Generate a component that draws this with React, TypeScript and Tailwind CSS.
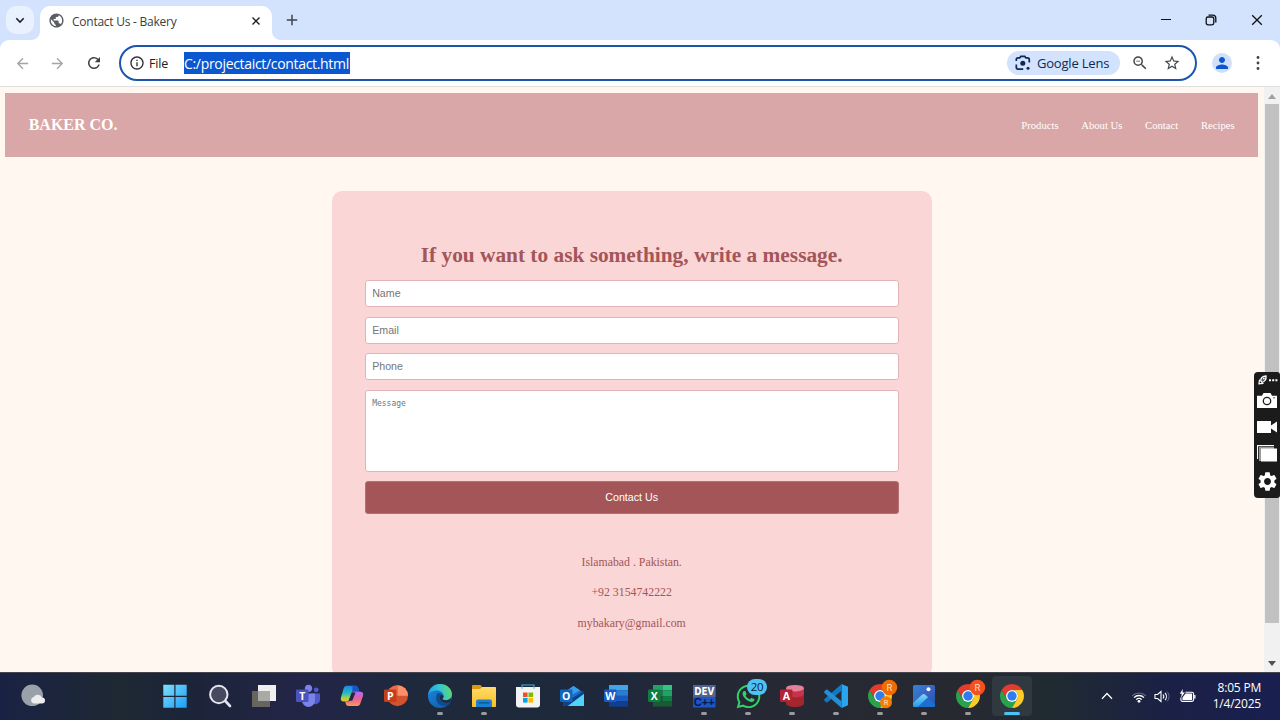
import React from "react";
import {
  MdArrowBack,
  MdArrowForward,
  MdInfoOutline,
  MdOutlineZoomOut,
  MdPerson,
  MdPublic,
  MdRefresh,
  MdSettings,
  MdStarBorder,
} from "react-icons/md";
import { FaWhatsapp } from "react-icons/fa";

type IconProps = { children: React.ReactNode; className?: string };

function Icon({ children, className = "h-6 w-6" }: IconProps) {
  return (
    <svg viewBox="0 0 24 24" className={`${className} overflow-visible`}>
      {children}
    </svg>
  );
}

function AppLetter({ x, y, letter }: { x: number; y: number; letter: string }) {
  return (
    <text x={x} y={y} fill="#fff" fontSize="10.5" fontWeight="700" textAnchor="middle" fontFamily="Open Sans, sans-serif">
      {letter}
    </text>
  );
}

function WindowsLogo() {
  return (
    <Icon>
      <defs>
        <linearGradient id="win" x1="0" y1="0" x2="1" y2="1">
          <stop offset="0" stopColor="#7fe0fb" />
          <stop offset="1" stopColor="#1a9cf5" />
        </linearGradient>
      </defs>
      <path d="M.3.8h11v11H.3zM12.5.8h11.2v11H12.5zM.3 13h11v10.800H.3zM12.5 13h11.2v10.800H12.5z" fill="url(#win)" />
    </Icon>
  );
}

function SearchLogo() {
  return (
    <Icon>
      <circle cx="10.8" cy="10.5" r="8.700" fill="#454a60" stroke="#e4e6ee" strokeWidth="2" />
      <path d="M17.300 17 22 22" stroke="#e4e6ee" strokeWidth="2.600" strokeLinecap="round" />
    </Icon>
  );
}

function TaskView() {
  return (
    <Icon>
      <path d="M0 7h18v16H0z" fill="#66665f" />
      <path d="M6 1h18v16H6z" fill="#efefef" />
      <path d="M6 7h12v10H6z" fill="#a9a9a6" />
    </Icon>
  );
}

function Teams() {
  return (
    <Icon>
      <circle cx="12.5" cy="4.300" r="3.600" fill="#7b83eb" />
      <circle cx="20.200" cy="5.800" r="2.400" fill="#5059c9" />
      <path d="M15 9.500h9v6.500a4.400 4.400 0 0 1-7 3.400z" fill="#5059c9" />
      <path d="M6 9.500h13v7a6.500 6.500 0 0 1-13 0z" fill="#7b83eb" />
      <rect x="0" y="5.500" width="12.500" height="12.500" rx="1.200" fill="#4b53bc" />
      <AppLetter x={6.2} y={15.6} letter="T" />
    </Icon>
  );
}

function Copilot() {
  return (
    <Icon>
      <defs>
        <linearGradient id="cpA" x1="0" y1="0" x2="0" y2="1">
          <stop offset="0" stopColor="#1b88e6" />
          <stop offset=".45" stopColor="#25b5c9" />
          <stop offset=".75" stopColor="#9bd04a" />
          <stop offset="1" stopColor="#f5c52e" />
        </linearGradient>
        <linearGradient id="cpB" x1="0" y1="0" x2="0" y2="1">
          <stop offset="0" stopColor="#b06af0" />
          <stop offset=".5" stopColor="#ea5f9c" />
          <stop offset="1" stopColor="#fa9a54" />
        </linearGradient>
      </defs>
      <path d="M6.700 1.800h8.800c1.600 0 2.300 1 2.700 2.300l1.200 3.600h-5.100c-1.600 0-2.300.9-2.700 2.300L9.300 15.500c-.5 1.400-1.300 2-2.700 2H3.500C1.200 17.500.3 15.800 1 13.200L3.600 4.500C4.200 2.700 5.100 1.800 6.700 1.800z" fill="url(#cpA)" />
      <path d="M12.500 1.800h3c1.600 0 2.300 1 2.700 2.300l1.200 3.600h-5.100c-.9 0-1.600.3-2 .9z" fill="#1b52c4" />
      <path d="M17.300 22h-8.800c-1.600 0-2.300-1-2.700-2.300l-.7-2.200h2.300c1.600 0 2.300-.9 2.700-2.300l2-5.500c.5-1.400 1.300-2 2.700-2h5.700c2.300 0 3.200 1.700 2.500 4.300l-2.600 7.300C19.800 21.100 18.900 22 17.300 22z" fill="url(#cpB)" />
      <path d="M11.700 8.600h3.900l-3.400 8.200H8.600z" fill="#222745" />
    </Icon>
  );
}

function PowerPoint() {
  return (
    <Icon>
      <circle cx="13.500" cy="11.700" r="10.500" fill="#d35230" />
      <path d="M13.500 1.200A10.500 10.500 0 0 1 24 11.700H13.500z" fill="#ff8f6b" />
      <path d="M13.500 1.200A10.500 10.500 0 0 0 3 11.700h10.500z" fill="#ed6c47" />
      <rect x="0" y="5.500" width="12.500" height="12.500" rx="1.200" fill="#c43e1c" />
      <AppLetter x={6.3} y={15.6} letter="P" />
    </Icon>
  );
}

function Edge() {
  return (
    <Icon>
      <defs>
        <linearGradient id="edA" x1="0" y1=".5" x2="1" y2=".3">
          <stop offset="0" stopColor="#1f9fe8" />
          <stop offset=".5" stopColor="#33c3d6" />
          <stop offset="1" stopColor="#5fdc62" />
        </linearGradient>
        <linearGradient id="edB" x1="0" y1="0" x2="1" y2="1">
          <stop offset="0" stopColor="#1b8be0" />
          <stop offset="1" stopColor="#0f539f" />
        </linearGradient>
      </defs>
      <circle cx="12" cy="12" r="12" fill="url(#edB)" />
      <path d="M.1 11C.7 4.800 5.700 0 12 0c7 0 12 5 12 10.300 0 3.700-2.900 6-6 6-2.400 0-4-.8-3.400-1.700.7-.9 1-1.700 1-2.700C15.600 8.800 12.300 6.500 9 6.500 4.500 6.500 1 8.800.1 11z" fill="url(#edA)" />
      <path d="M9.400 9.600c-2.900 4.500-.8 11.600 6 12.200 2.700.2 5.300-1 7.100-3.300-3.300 1.300-7.500 1-9.500-1.500-1.300-1.600-1.500-3.200-.8-4.700.5-1 .3-2.200-.5-2.700-.8-.6-1.800-.5-2.300 0z" fill="#0d4a90" />
      <path d="M12.200 12.300c.5-1 .5-2-.3-2.700l3.700 2.300c0 1-.3 1.800-1 2.700-.6.900 1 1.700 3.400 1.700 2 0 4-1 5.100-2.700-.2 1.800-.5 3.100-1.100 4.700-3 1.200-7 .9-9-1.500-1.300-1.600-1.500-3.200-.8-4.500z" fill="#212c3f" />
    </Icon>
  );
}

function Explorer() {
  return (
    <Icon>
      <defs>
        <linearGradient id="fold" x1="0" y1="0" x2="0" y2="1">
          <stop offset="0" stopColor="#fedb6a" />
          <stop offset="1" stopColor="#f8bf26" />
        </linearGradient>
      </defs>
      <path d="M0 2.200C0 1.500.5 1 1.200 1h7.300l2 2.500V8H0z" fill="#d99a11" />
      <path d="M0 5h8l2.300-2H23c.6 0 1 .4 1 1v18c0 .6-.4 1-1 1H1c-.6 0-1-.4-1-1z" fill="url(#fold)" />
      <path d="M4 23v-5.500c0-1.200.8-2 2-2h12c1.200 0 2 .8 2 2V23z" fill="#1a80d2" />
      <path d="M7 18.800h10" stroke="#0c4f8d" strokeWidth="1.300" strokeLinecap="round" />
    </Icon>
  );
}

function Store() {
  return (
    <Icon>
      <path d="M6 4.500V1h12v3.500" fill="none" stroke="#3bb4e8" strokeWidth="1.100" />
      <path d="M0 3h24v17.500c0 2-1 3-3 3H3c-2 0-3-1-3-3z" fill="#f3f3f3" />
      <path d="M6 3v1.800M18 3v1.800" stroke="#3bb4e8" strokeWidth="1.100" />
      <path d="M7 8.500h4.600v4.600H7z" fill="#f25022" />
      <path d="M12.500 8.500h4.600v4.600h-4.600z" fill="#7fba00" />
      <path d="M7 14h4.600v4.600H7z" fill="#00a4ef" />
      <path d="M12.500 14h4.600v4.600h-4.600z" fill="#ffb900" />
    </Icon>
  );
}

function Outlook() {
  return (
    <Icon>
      <path d="M3 9 13.500 2 24 9v13H3z" fill="#1a6fc9" />
      <path d="M5 8 13.500 2 20 6.300 10 12z" fill="#3c9cec" />
      <path d="M24 9v12c0 .8-.4 1-1 1H5l9-7z" fill="#3fc7f4" />
      <path d="M3 15l8 0 8.500-5.500L24 7v3L8 22H4.500C3.500 22 3 21.500 3 20.500z" fill="#0f3f91" />
      <path d="M24 10v11c0 .8-.4 1-1 1H8z" fill="#4fd4f7" />
      <rect x="0" y="5.500" width="12.500" height="12.500" rx="1.200" fill="#1066bd" />
      <AppLetter x={6.3} y={15.6} letter="O" />
    </Icon>
  );
}

function OfficeDoc({ letter, shades, badge }: { letter: string; shades: string[]; badge: string }) {
  return (
    <Icon>
      {shades.map((shade, i) => (
        <rect key={shade} x="5" y={1 + i * 5.4} width="19" height="5.5" fill={shade} />
      ))}
      <rect x="0" y="5.500" width="12.500" height="12.500" rx="1.200" fill={badge} />
      <AppLetter x={6.3} y={15.6} letter={letter} />
    </Icon>
  );
}

function Excel() {
  return (
    <Icon>
      <path d="M5 1h9.500v5.500H5z" fill="#21a366" />
      <path d="M14.500 1H24v5.500h-9.500z" fill="#33c481" />
      <path d="M5 6.500h9.500V12H5z" fill="#107c41" />
      <path d="M14.500 6.500H24V12h-9.500z" fill="#21a366" />
      <path d="M5 12h9.500v5.500H5z" fill="#185c37" />
      <path d="M14.500 12H24v5.500h-9.500z" fill="#107c41" />
      <path d="M5 17.500h19v5H5z" fill="#185c37" />
      <rect x="0" y="5.500" width="12.500" height="12.500" rx="1.200" fill="#107c41" />
      <AppLetter x={6.3} y={15.6} letter="X" />
    </Icon>
  );
}

function DevCpp() {
  return (
    <Icon>
      <rect x="1" y="1" width="22.500" height="22.500" fill="#1c55c4" />
      <rect x="1" y="1" width="22.500" height="12" fill="#52638f" />
      <text x="12.200" y="11.300" fill="#fff" fontSize="10" fontWeight="700" textAnchor="middle" fontFamily="DejaVu Sans" textLength="20" lengthAdjust="spacingAndGlyphs">DEV</text>
      <text x="12.200" y="21.800" fill="#06184a" fontSize="11" fontWeight="700" textAnchor="middle" fontFamily="Liberation Sans" textLength="21" lengthAdjust="spacingAndGlyphs">C++</text>
    </Icon>
  );
}

function Access() {
  return (
    <Icon>
      <path d="M6 4v15.500c0 2 4 3.500 9 3.500s9-1.500 9-3.500V4z" fill="#a4262c" />
      <path d="M6 10c0 2 4 3.300 9 3.300S24 12 24 10V4H6z" fill="#c8324b" />
      <ellipse cx="15" cy="4.200" rx="9" ry="3.300" fill="#e3809a" />
      <rect x="0" y="5.500" width="12.500" height="12.500" rx="1.200" fill="#b02434" />
      <AppLetter x={6.3} y={15.6} letter="A" />
    </Icon>
  );
}

function VsCode() {
  return (
    <Icon>
      <path d="M17.500 0 24 2.800v18.400L17.500 24z" fill="#2aa4ef" />
      <path d="M17.500 0v6.800L3.500 18.200c-.4.3-.9.3-1.300 0L.5 16.700c-.5-.5-.5-1.200 0-1.600z" fill="#1478bf" />
      <path d="M17.500 24v-6.800L3.500 5.800c-.4-.3-.9-.3-1.300 0L.5 7.300c-.5.5-.5 1.200 0 1.600z" fill="#2190d8" />
    </Icon>
  );
}

function ChromeMark() {
  return (
    <>
      <path d="M1.610 6A12 12 0 0 1 22.390 6H12A6 6 0 0 0 6.800 15z" fill="#e33b2e" />
      <path d="M1.610 6 6.800 15A6 6 0 0 0 17.200 15L12 24A12 12 0 0 1 1.610 6z" fill="#2aa14b" />
      <path d="M22.390 6A12 12 0 0 1 12 24l5.200-9A6 6 0 0 0 12 6z" fill="#fccb26" />
      <circle cx="12" cy="12" r="6" fill="#fff" />
      <circle cx="12" cy="12" r="4.700" fill="#2d7df0" />
    </>
  );
}

function Chrome({ badges = 0 }: { badges?: number }) {
  return (
    <Icon>
      <ChromeMark />
      {badges > 0 && (
        <>
          <circle cx="21.400" cy="3.500" r="7.800" fill={badges === 1 ? "#f4511e" : "#ef6c00"} />
          <text x="21.400" y="7" fill="#ffdcc8" fontSize="9.500" textAnchor="middle" fontFamily="Roboto, sans-serif">R</text>
        </>
      )}
      {badges > 1 && (
        <>
          <circle cx="18" cy="18.300" r="6" fill="#f57c00" />
          <text x="18" y="21" fill="#ffe3c8" fontSize="7.500" textAnchor="middle" fontFamily="Roboto, sans-serif">R</text>
        </>
      )}
    </Icon>
  );
}

function WhatsApp() {
  return (
    <div className="relative h-6 w-6">
      <FaWhatsapp className="-mt-px -ml-px h-[27px] w-[27px] text-[#2fd366]" />
      <span className="absolute -top-[5px] left-[11px] flex h-[16px] w-[20px] items-center justify-center rounded-full bg-[#4cc2f5] font-['Open_Sans',sans-serif] text-[11.500px] leading-none tracking-[-0.3px] text-[#10212c]">
        20
      </span>
    </div>
  );
}

function Photos() {
  return (
    <Icon>
      <defs>
        <linearGradient id="ph" x1="0" y1="0" x2="1" y2="1">
          <stop offset="0" stopColor="#2b86d8" />
          <stop offset=".5" stopColor="#3f62bf" />
          <stop offset="1" stopColor="#1a57b4" />
        </linearGradient>
        <linearGradient id="ph2" x1="0" y1="0" x2="0" y2="1">
          <stop offset="0" stopColor="#7fd8fb" />
          <stop offset="1" stopColor="#2398e8" />
        </linearGradient>
      </defs>
      <rect x="1" y="1" width="22" height="22" rx="1.500" fill="url(#ph)" />
      <path d="M1 19 10.300 10.500c.9-.8 1.800-.8 2.700 0l3 2.800L6 23H2.500C1.500 23 1 22.500 1 21.500z" fill="url(#ph2)" />
      <path d="M6 23 14.500 15c.8-.7 1.700-.7 2.500 0l6 5.500v1c0 1-.5 1.500-1.500 1.500z" fill="#1b6fd0" />
      <circle cx="16.500" cy="5.300" r="2" fill="#f2f8ff" />
    </Icon>
  );
}

const apps: { name: string; icon: React.ReactNode; open?: boolean; active?: boolean }[] = [
  { name: "start", icon: <WindowsLogo /> },
  { name: "search", icon: <SearchLogo /> },
  { name: "taskview", icon: <TaskView /> },
  { name: "teams", icon: <Teams /> },
  { name: "copilot", icon: <Copilot /> },
  { name: "powerpoint", icon: <PowerPoint /> },
  { name: "edge", icon: <Edge />, open: true },
  { name: "explorer", icon: <Explorer />, open: true },
  { name: "store", icon: <Store /> },
  { name: "outlook", icon: <Outlook /> },
  { name: "word", icon: <OfficeDoc letter="W" badge="#185abd" shades={["#41a5ee", "#2b7cd3", "#185abd", "#103f91"]} /> },
  { name: "excel", icon: <Excel /> },
  { name: "devcpp", icon: <DevCpp />, open: true },
  { name: "whatsapp", icon: <WhatsApp />, open: true },
  { name: "access", icon: <Access />, open: true },
  { name: "vscode", icon: <VsCode />, open: true },
  { name: "chrome-a", icon: <Chrome badges={2} />, open: true },
  { name: "photos", icon: <Photos />, open: true },
  { name: "chrome-b", icon: <Chrome badges={1} />, open: true },
  { name: "chrome", icon: <Chrome />, active: true },
];

function TabStrip() {
  return (
    <div className="flex h-10 items-start bg-[#d3e2fd]">
      <div className="mt-[6px] ml-[6px] flex h-7 w-7 items-center justify-center rounded-[10px] bg-[#e9f0fe]">
        <svg viewBox="0 0 10 10" className="h-[10px] w-[10px]">
          <path d="M1.300 3.300 5 7l3.700-3.700" fill="none" stroke="#1c1f25" strokeWidth="1.600" />
        </svg>
      </div>
      <div className="h-2 w-[6px] shrink-0" />
      <div className="relative mt-[6px] flex h-[34px] w-[232px] items-center rounded-t-[10px] bg-white pb-[5px]">
        <span className="absolute bottom-0 -left-2 h-2 w-2 bg-[radial-gradient(circle_at_0_0,transparent_7.500px,white_8px)]" />
        <span className="absolute -right-2 bottom-0 h-2 w-2 bg-[radial-gradient(circle_at_100%_0,transparent_7.500px,white_8px)]" />
        <MdPublic className="ml-2 h-[17px] w-[17px] text-[#5a5e63]" />
        <span className="ml-[7px] flex-1 pt-[2px] text-[12px] tracking-[-0.25px] whitespace-nowrap text-[#3b3d41]">Contact Us - Bakery</span>
        <svg viewBox="0 0 10 10" className="mr-[11px] h-[10px] w-[10px]">
          <path d="M1.500 1.500l7 7M8.500 1.500l-7 7" stroke="#1f2023" strokeWidth="1.400" />
        </svg>
      </div>
      <svg viewBox="0 0 12 12" className="mt-[14px] ml-[14px] h-3 w-3">
        <path d="M6 .8v10.400M.8 6h10.400" stroke="#3f444c" strokeWidth="1.500" />
      </svg>
      <div className="mt-[14px] mr-[17px] ml-auto flex h-3 items-center">
        <svg viewBox="0 0 10 10" className="h-[10px] w-[10px]">
          <path d="M0 4.500h10" stroke="#111" strokeWidth="1" />
        </svg>
        <svg viewBox="0 0 12 12" className="ml-[34px] h-3 w-3">
          <rect x="1.200" y="3" width="7.600" height="7.800" rx="1.800" fill="none" stroke="#111" strokeWidth="1.300" />
          <path d="M3.500 1.200h4.300c2 0 3 1.100 3 3v4.300" fill="none" stroke="#111" strokeWidth="1.300" />
        </svg>
        <svg viewBox="0 0 12 12" className="ml-[34px] h-3 w-3">
          <path d="M1.200 1.200l9.600 9.600M10.800 1.200l-9.600 9.600" stroke="#111" strokeWidth="1.300" />
        </svg>
      </div>
    </div>
  );
}

function Toolbar() {
  return (
    <div className="bg-[#d3e2fd]">
      <div className="flex h-[47px] items-start rounded-t-[9px] border-b border-[#dfdfdf] bg-white">
        <div className="ml-[14px] flex h-[46px] items-center">
          <MdArrowBack className="h-[17px] w-[17px] text-[#a3a5a9]" />
          <MdArrowForward className="ml-[18px] h-[17px] w-[17px] text-[#a3a5a9]" />
          <MdRefresh className="ml-[19px] h-[18px] w-[18px] text-[#3f4246]" />
        </div>
        <div className="mt-[5px] ml-4 flex h-9 w-[1078px] items-center rounded-full border-2 border-[#1b55ac] bg-white">
          <MdInfoOutline className="ml-2 h-4 w-4 text-[#2a2d31]" />
          <span className="ml-1 w-[35px] pt-[2px] text-[12.500px] tracking-[-0.2px] text-[#202124]">File</span>
          <span className="flex h-[22px] w-[166px] items-center bg-[#0b57d0] text-[14px] tracking-[-0.32px] whitespace-nowrap text-white">
            C:/projectaict/contact.html
          </span>
          <div className="ml-auto flex h-6 w-[113px] items-center rounded-full bg-[#d3e2fd] whitespace-nowrap">
            <svg viewBox="0 0 16 16" className="ml-2 h-4 w-4">
              <g fill="none" stroke="#0b2a55" strokeWidth="1.700">
                <path d="M1.300 6V4.800c0-1.100.8-1.900 1.900-1.900h1.500L5.800 1.400h4l1.100 1.500h1.500c1.100 0 1.900.8 1.900 1.900V7.500M1.300 9.500v2.700c0 1.100.8 1.900 1.900 1.900h5" />
              </g>
              <circle cx="7.800" cy="8.300" r="2.500" fill="#0b2a55" />
              <circle cx="13" cy="13.300" r="1.500" fill="#0b2a55" />
            </svg>
            <span className="ml-[6px] pt-px text-[13px] font-medium tracking-[-0.2px] text-[#0b2a55]">Google Lens</span>
          </div>
          <MdOutlineZoomOut className="ml-[11px] h-[18px] w-[18px] text-[#45484d]" />
          <MdStarBorder className="mr-[14px] ml-[14px] h-[18px] w-[18px] text-[#45484d]" />
        </div>
        <div className="mt-[13px] ml-[15px] flex h-5 w-5 items-center justify-center rounded-full bg-[#d0e0fb]">
          <MdPerson className="h-[18px] w-[18px] text-[#0b57d0]" />
        </div>
        <svg viewBox="0 0 4 16" className="mt-[15px] mr-5 ml-auto h-4 w-1">
          <circle cx="2" cy="2.500" r="1.400" fill="#3e4145" />
          <circle cx="2" cy="8" r="1.400" fill="#3e4145" />
          <circle cx="2" cy="13.500" r="1.400" fill="#3e4145" />
        </svg>
      </div>
    </div>
  );
}

const fieldClass =
  "block w-full rounded-[3px] border border-[#e3b4b7] bg-white pr-[6px] pb-[2px] pl-[6.500px] text-[10.670px] font-['Liberation_Sans',sans-serif] placeholder:text-[#757575] placeholder:opacity-100";

function Page() {
  return (
    <main className="flex-1 overflow-hidden pt-[6px] pr-[6px] pl-[5.330px] font-['Liberation_Serif',serif]">
      <header className="flex h-[64px] items-center justify-between bg-[#d9a7a7] px-[23.330px] text-white">
        <div className="text-[16px] font-bold whitespace-nowrap">BAKER CO.</div>
        <nav className="flex gap-[22.700px] text-[10.670px] whitespace-nowrap">
          <a>Products</a>
          <a>About Us</a>
          <a>Contact</a>
          <a>Recipes</a>
        </nav>
      </header>
      <section className="mx-auto mt-[34px] h-[486px] w-[600px] rounded-[10px] bg-[#fad6d6] px-[33px] pt-[50px] text-center text-[#a35558]">
        <h1 className="h-[39px] text-[21.330px] leading-[28px] font-bold whitespace-nowrap">If you want to ask something, write a message.</h1>
        <form className="flex flex-col">
          <input className={`${fieldClass} h-[27px]`} placeholder="Name" />
          <input className={`${fieldClass} mt-[10px] h-[27px]`} placeholder="Email" />
          <input className={`${fieldClass} mt-[9px] h-[27px]`} placeholder="Phone" />
          <textarea
            className="mt-[10px] block h-[82px] w-full resize-none rounded-[3px] border border-[#e3b4b7] bg-white px-[6.500px] pt-[7px] font-['DejaVu_Sans_Mono',monospace] text-[8px] placeholder:text-[#757575]"
            placeholder="Message"
          />
          <button type="button" className="mt-[9px] h-[33px] rounded-[3px] border border-[#b86f72] bg-[#a35558] pb-[2px] font-['Liberation_Sans',sans-serif] text-[10.670px] text-white">
            Contact Us
          </button>
        </form>
        <div className="mt-[39.500px] text-[11.800px] leading-[16px] whitespace-nowrap">
          <p>Islamabad . Pakistan.</p>
          <p className="mt-[14px]">+92 3154742222</p>
          <p className="mt-[15px]">mybakary@gmail.com</p>
        </div>
      </section>
    </main>
  );
}

function Scrollbar() {
  return (
    <div className="flex w-4 flex-col items-center bg-[#f1f1f1] pt-[7px] pb-[6px]">
      <svg viewBox="0 0 8 5" className="h-[5px] w-2">
        <path d="M0 5 4 0l4 5z" fill="#a0a0a0" />
      </svg>
      <div className="mt-[5px] h-[519px] w-[14px] bg-[#c1c1c1]" />
      <svg viewBox="0 0 8 5" className="mt-auto h-[5px] w-2">
        <path d="M0 0h8L4 5z" fill="#505050" />
      </svg>
    </div>
  );
}

function Recorder() {
  return (
    <div className="absolute top-[372px] right-0 flex h-[126px] w-[26px] flex-col items-center rounded-l-[4px] rounded-r-[3px] bg-[#1b1b1b]">
      <svg viewBox="0 0 20 10" className="mt-[3px] ml-[1px] h-[10px] w-5">
        <path d="M2.800 6C2.300 3.200 4.500 1 8 1c.4 3.300-1.200 6-4 6.300z" fill="#555" stroke="#fff" strokeWidth="1.300" />
        <path d="M1.600 4.500.9 8.900l4.600-.6" fill="none" stroke="#fff" strokeWidth="1.200" />
        <circle cx="5.800" cy="3.600" r=".9" fill="#fff" />
        <path d="M11 4.200h2v2h-2zM14.200 4.200h2v2h-2zM17.400 4.200h2v2h-2z" fill="#fff" />
      </svg>
      <svg viewBox="0 0 20 15" className="mt-[8px] h-[15px] w-5">
        <path d="M0 2.800h5L6.500 0h7L15 2.800h5V15H0z" fill="#fff" />
        <circle cx="10" cy="8" r="3.700" fill="#fff" stroke="#1b1b1b" strokeWidth="1.300" />
        <circle cx="17" cy="4.800" r=".7" fill="#1b1b1b" />
      </svg>
      <svg viewBox="0 0 20 14" className="mt-[12px] h-[14px] w-5">
        <path d="M0 1h14v4.500L20 1.500v11l-6-4V13H0z" fill="#fff" />
      </svg>
      <svg viewBox="0 0 20 17" className="mt-[11px] h-[17px] w-5">
        <path d="M.5 14V.6H17" fill="none" stroke="#fff" strokeWidth="1.200" />
        <path d="M2 2h15v2H4v12H2z" fill="#9b9b9b" />
        <path d="M4 3.500h16v13H4z" fill="#fff" />
      </svg>
      <MdSettings className="mt-2 h-[23px] w-[23px] shrink-0 text-white" />
    </div>
  );
}

function Taskbar() {
  return (
    <div className="flex h-12 border-t border-[#454550] bg-[linear-gradient(90deg,#1a2244_0px,#1e2933_120px,#1c2438_180px,#232547_310px,#1e293b_420px,#1f283b_620px,#262834_760px,#272931_960px,#202b31_1050px,#1b2144_1160px,#191f50_1280px)]">
      <div className="flex w-[154px] items-center pb-px">
        <svg viewBox="0 0 24 24" className="ml-[21px] h-6 w-6">
          <circle cx="11.200" cy="11.300" r="10.800" fill="#9aa1a9" />
          <path d="M13 19.500a3.300 3.300 0 0 1-.2-6.500 4.600 4.600 0 0 1 8.200.5 3 3 0 0 1 0 6z" fill="#eceeee" />
        </svg>
      </div>
      <div className="-ml-px flex">
        {apps.map((app) => (
          <div key={app.name} className="flex w-11 justify-center">
            <div
              className={`mt-[3px] flex h-[40px] w-10 flex-col items-center rounded-[4px] pt-2 ${
                app.active ? "bg-[#30393f]" : ""
              } ${app.name === "start" ? "" : "translate-x-px"}`}
            >
              {app.icon}
              {app.open && <div className="mt-[4px] h-[3px] w-[6px] shrink-0 rounded-full bg-[#9a9ba0]" />}
              {app.active && <div className="mt-[4px] h-[3px] w-4 shrink-0 rounded-full bg-[#4cc2f5]" />}
            </div>
          </div>
        ))}
      </div>
      <div className="ml-auto flex items-center pr-[19px] pb-px text-white">
        <svg viewBox="0 0 12 8" className="h-2 w-3">
          <path d="M1 6.700 6 1.500l5 5.200" fill="none" stroke="#fff" strokeWidth="1.300" />
        </svg>
        <svg viewBox="0 0 16 13" className="ml-[18px] h-[13px] w-4">
          <path d="M1.200 5.800a9.600 9.600 0 0 1 13.600 0" fill="none" stroke="#686c8e" strokeWidth="1.200" />
          <path d="M3 7.600a7 7 0 0 1 10 0M5.200 9.600a4 4 0 0 1 5.600 0" fill="none" stroke="#fff" strokeWidth="1.300" />
          <circle cx="8" cy="11.300" r="1.400" fill="#fff" />
        </svg>
        <svg viewBox="0 0 16 13" className="ml-[7px] h-[13px] w-4">
          <path d="M1 4.500h2.600L7 1.500v10l-3.400-3H1z" fill="none" stroke="#fff" strokeWidth="1.100" />
          <path d="M9 4.500c1 1.200 1 2.800 0 4M11 3c1.900 2 1.900 5 0 7" fill="none" stroke="#fff" strokeWidth="1.100" />
          <path d="M13 1.500c2.700 3 2.700 7 0 10" fill="none" stroke="#686c8e" strokeWidth="1" />
        </svg>
        <svg viewBox="0 0 17 14" className="ml-[9px] h-[14px] w-[17px]">
          <path d="M6.500 3.200H13c1 0 1.600.6 1.600 1.600v6c0 1-.6 1.600-1.600 1.600H3.500c-1 0-1.600-.6-1.600-1.600V8.500" fill="none" stroke="#fff" strokeWidth="1.100" />
          <path d="M6.500 4.600h6.600v6.400H3.500V8.500zM15.200 6h1.300v3.500h-1.300z" fill="#fff" />
          <path d="M3.800 0 .8 4.800h2L2 8.800l3.800-5.300H3.600z" fill="#fff" />
        </svg>
        <div className="ml-[9px] w-[56px] text-right text-[12px] leading-4 tracking-[-0.2px] whitespace-nowrap">
          <div>8:05 PM</div>
          <div>1/4/2025</div>
        </div>
      </div>
    </div>
  );
}

export default function App() {
  return (
    <div className="relative flex h-[720px] w-[1280px] flex-col overflow-hidden bg-[#fff7f0] font-['Open_Sans',sans-serif]">
      <TabStrip />
      <Toolbar />
      <div className="flex h-[585px] overflow-hidden">
        <Page />
        <Scrollbar />
      </div>
      <Taskbar />
      <Recorder />
    </div>
  );
}
